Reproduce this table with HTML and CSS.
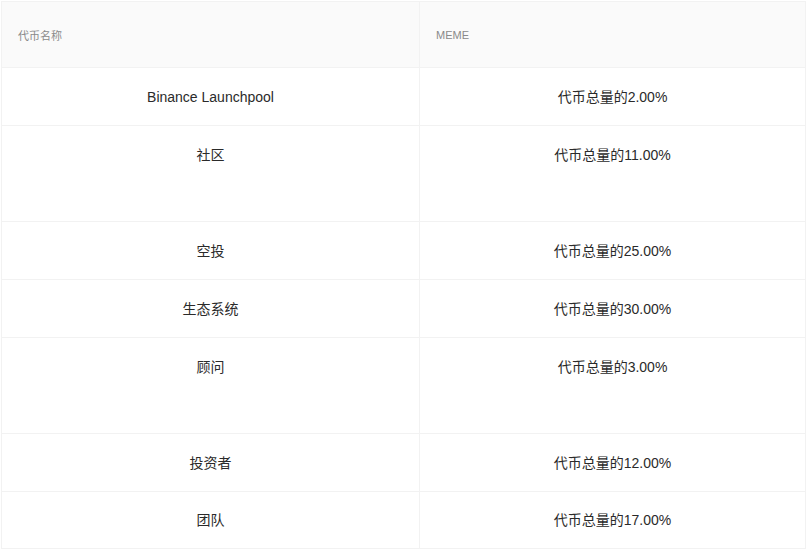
FILE: index.html
```html
<!DOCTYPE html>
<html lang="zh">
<head>
<meta charset="utf-8">
<link rel="stylesheet" href="styles.css">
</head>
<body>
<table class="alloc">
  <thead>
    <tr><th class="c1">代币名称</th><th class="c2">MEME</th></tr>
  </thead>
  <tbody>
    <tr><td>Binance Launchpool</td><td>代币总量的2.00%</td></tr>
    <tr class="tall"><td>社区</td><td>代币总量的11.00%</td></tr>
    <tr><td>空投</td><td>代币总量的25.00%</td></tr>
    <tr><td>生态系统</td><td>代币总量的30.00%</td></tr>
    <tr class="tall"><td>顾问</td><td>代币总量的3.00%</td></tr>
    <tr><td>投资者</td><td>代币总量的12.00%</td></tr>
    <tr class="last"><td>团队</td><td>代币总量的17.00%</td></tr>
  </tbody>
</table>
</body>
</html>
```
FILE: styles.css
```css
html, body {
  margin: 0;
  background: #ffffff;
}
body {
  padding: 1px 4px 0 1px;
  font-family: "Liberation Sans", "Noto Sans CJK SC", sans-serif;
}
.alloc {
  width: 805px;
  border-collapse: collapse;
  table-layout: fixed;
}
.alloc th, .alloc td {
  border: 1px solid #f2f2f2;
}
.alloc th {
  background: #fafafa;
  height: 65px;
  padding: 0 16px;
  text-align: left;
  font-weight: normal;
  font-size: 11px;
  color: #8a8a8a;
}
.alloc th.c1 { width: 385px; }
.alloc td {
  height: 57px;
  padding: 0;
  text-align: center;
  font-size: 14px;
  color: #2a2a2a;
  line-height: 20px;
}
.alloc tr.last td {
  height: 56px;
}
.alloc tr.tall td {
  height: 96px;
  vertical-align: top;
  padding-top: 19px;
  box-sizing: border-box;
}
```
